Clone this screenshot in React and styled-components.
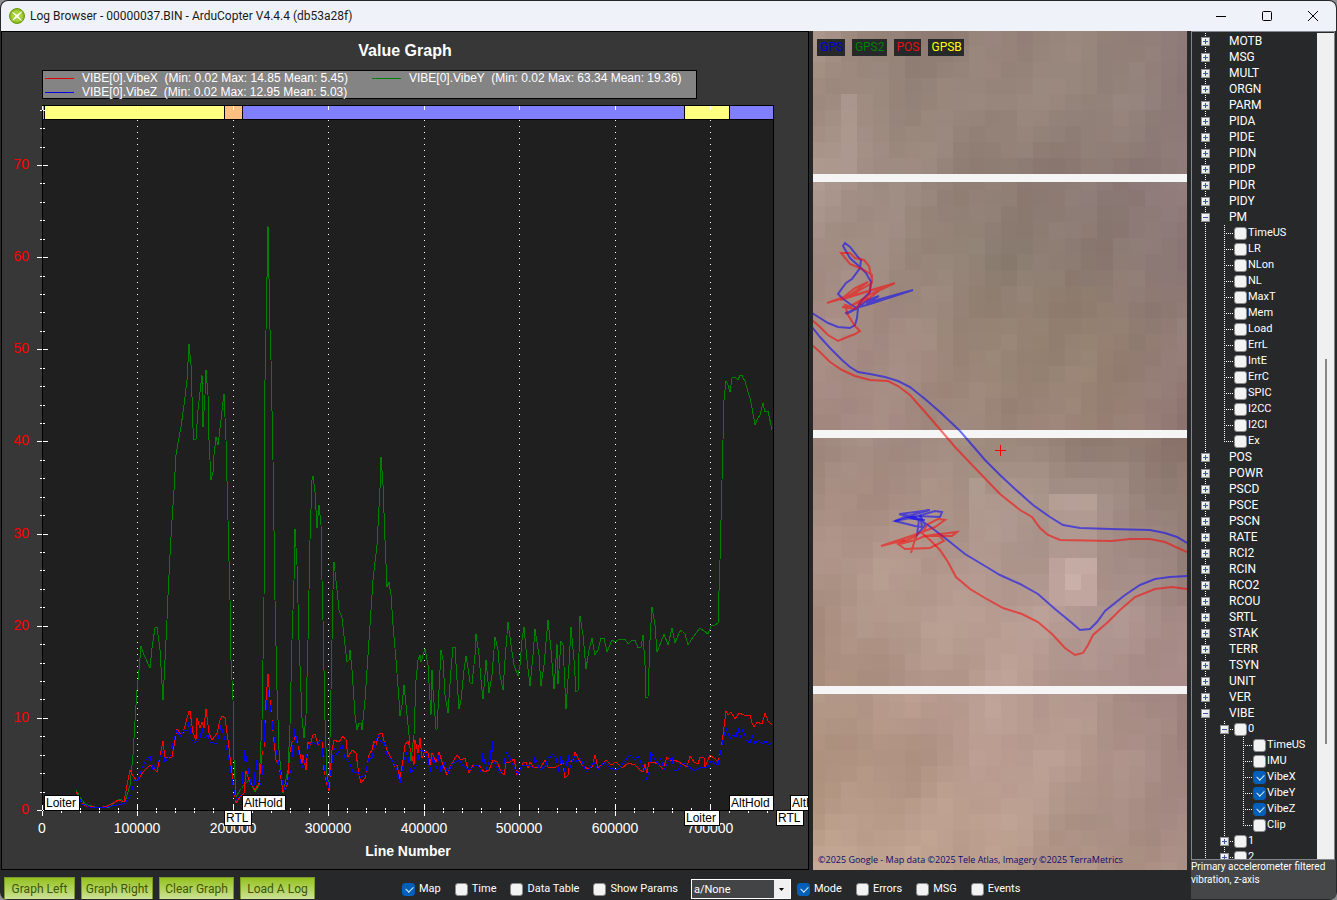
import React from "react";
import styled, { createGlobalStyle, css } from "styled-components";

const GlobalStyle = createGlobalStyle`
  * {
    box-sizing: border-box;
  }
  body {
    margin: 0;
    background: #8f8f93;
    font-family: Roboto, "Liberation Sans", sans-serif;
    font-size: 11px;
  }
`;

const Window = styled.div`
  display: flex;
  flex-direction: column;
  height: 100vh;
  padding: 1px 1px 1px 1px;
  background: #262829;
  border-radius: 8px;
  overflow: hidden;
`;
const TitleBar = styled.header`
  display: flex;
  align-items: center;
  flex: none;
  height: 30px;
  padding-left: 8px;
  background: #eff3f9;
  border-radius: 7px 7px 0 0;
`;
const WindowTitle = styled.h1`
  flex: 1;
  margin: 0 0 0 5px;
  color: #1a1a1a;
  font-size: 12px;
  font-weight: 400;
  line-height: 16px;
`;
const WindowButton = styled.button`
  display: flex;
  align-items: center;
  justify-content: center;
  width: 46px;
  height: 30px;
  padding: 0;
  background: none;
  border: none;
`;
const Body = styled.div`
  display: flex;
  flex: 1;
  gap: 4px;
  min-height: 0;
`;
const Workspace = styled.main`
  display: flex;
  flex: 1;
  flex-direction: column;
  min-width: 0;
`;
const Panels = styled.div`
  display: grid;
  grid-template-columns: minmax(0, 808fr) minmax(0, 374fr);
  flex: 1;
  gap: 4px;
  min-height: 0;
`;

const ChartPanel = styled.section`
  display: flex;
  flex-direction: column;
  min-height: 0;
  background: #373737;
  border: 1px solid #000;
  font-family: "Liberation Sans", Arial, sans-serif;
`;
const ChartTitle = styled.h2`
  margin: 9px 0;
  color: #fff;
  font-size: 16px;
  line-height: 20px;
  text-align: center;
`;
const Legend = styled.ul`
  display: grid;
  grid-template-columns: 327px 326px;
  align-self: flex-start;
  height: 29px;
  margin: 0 0 0 40px;
  padding: 0;
  background: #848484;
  border: 1px solid #000;
  list-style: none;
`;
const LegendItem = styled.li`
  display: flex;
  align-items: center;
  gap: 8px;
  height: 14px;
  padding-left: 2px;
  color: #fff;
  font-size: 12px;
  line-height: 14px;
  white-space: pre;
`;
const LegendLine = styled.span`
  width: 29px;
  height: 1px;
  background: ${(p) => p.$color};
`;
const Plot = styled.svg`
  display: block;
  flex: 1;
  width: 100%;
  min-height: 0;
`;

const MapPanel = styled.section`
  position: relative;
  min-height: 0;
  overflow: hidden;
  background: #9f8b82;
`;
const MapCanvas = styled.svg`
  position: absolute;
  inset: 0;
  width: 100%;
  height: 100%;
`;
const MapTags = styled.div`
  position: absolute;
  top: 8px;
  left: 4px;
  display: flex;
  gap: 7px;
`;
const MapTag = styled.span`
  height: 17px;
  padding: 0 2px 0 3px;
  background: #262829;
  color: ${(p) => p.$color};
  font-size: 12px;
  line-height: 16px;
`;
const MapCredit = styled.span`
  position: absolute;
  bottom: 4px;
  left: 5px;
  color: #0c0c70;
  font-family: "Open Sans", sans-serif;
  font-size: 9px;
  line-height: 12px;
  white-space: nowrap;
`;

const Toolbar = styled.footer`
  display: flex;
  flex: none;
  align-items: flex-end;
  gap: 6px;
  height: 29px;
  padding-left: 3px;
`;
const GraphButton = styled.button`
  height: 22px;
  min-width: ${(p) => p.$width}px;
  padding: 0;
  background: linear-gradient(#94c11f, #cde296);
  border: 1px solid #799a2a;
  border-bottom: none;
  color: #405704;
  font-family: inherit;
  font-size: 12px;
`;
const Options = styled.div`
  display: flex;
  align-items: center;
  gap: 14px;
  height: 20px;
  margin-left: ${(p) => (p.$first ? 81 : 0)}px;
`;
const CheckLabel = styled.label`
  display: flex;
  align-items: center;
  gap: ${(p) => (p.$tree ? 1 : 4)}px;
  color: #fff;
  font-size: 11px;
  line-height: 16px;
  white-space: nowrap;
`;
const Check = styled.input`
  position: relative;
  flex: none;
  width: 13px;
  height: 13px;
  margin: 0;
  appearance: none;
  background: #f3f3f3;
  border: 1px solid #8c8c8c;
  border-radius: 3px;

  &:checked {
    background: #005fb8;
    border-color: #005fb8;
  }
  &:checked::after {
    content: "";
    position: absolute;
    top: 2px;
    left: 3px;
    width: 6px;
    height: 4px;
    border: solid #dbe9f5;
    border-width: 0 0 1px 1px;
    transform: rotate(-45deg);
  }
`;
const SelectBox = styled.div`
  position: relative;
  margin-left: 7px;
`;
const Select = styled.select`
  display: block;
  width: 100px;
  height: 20px;
  padding: 0 0 0 2px;
  appearance: none;
  background: #434445;
  border: 1px solid #fff;
  border-radius: 0;
  color: #fff;
  font-family: inherit;
  font-size: 11px;
`;
const SelectArrow = styled.span`
  position: absolute;
  top: 1px;
  right: 1px;
  display: flex;
  align-items: center;
  justify-content: center;
  width: 16px;
  height: 18px;
  background: #f0f0f0;
  pointer-events: none;
`;

const Sidebar = styled.aside`
  display: flex;
  flex: none;
  flex-direction: column;
  width: 145px;
`;
const TreeBox = styled.div`
  display: flex;
  flex: 1;
  min-height: 0;
  margin-right: 1px;
  padding-top: 1px;
  border: 1px solid #82878f;
`;
const Tree = styled.ul`
  flex: 1;
  margin: 0;
  padding: 0 0 0 4px;
  overflow: hidden;
  list-style: none;
`;
const TreeRow = styled.li`
  display: flex;
  align-items: center;
  height: 16px;
`;
const RootName = styled.span`
  padding-left: 14px;
  color: #fff;
  font-size: 12px;
  line-height: 16px;
`;
const dotsDown = "repeating-linear-gradient(#fff 0 1px, transparent 1px 2px)";
const dotsAcross = "repeating-linear-gradient(90deg, #fff 0 1px, transparent 1px 2px)";
const Guide = styled.span`
  display: flex;
  flex: none;
  align-items: center;
  justify-content: center;
  width: 19px;
  height: 16px;
  background-repeat: no-repeat;
  ${(p) =>
    p.$branch
      ? css`
          background-image: ${dotsDown}, ${dotsAcross};
          background-position: 9px 0, 9px 8px;
          background-size: 1px ${p.$last ? 9 : 16}px, 9px 1px;
        `
      : css`
          background-image: ${dotsDown};
          background-position: 9px 0;
          background-size: 1px 16px;
        `}
`;
const Expander = styled.button`
  display: flex;
  align-items: center;
  justify-content: center;
  width: 9px;
  height: 9px;
  padding: 0;
  background: linear-gradient(135deg, #fff, #dcdcdc);
  border: 1px solid #919191;
`;
const ScrollTrack = styled.div`
  display: flex;
  flex: none;
  flex-direction: column;
  align-items: center;
  width: 17px;
  background: #f0f0f0;
`;
const ScrollThumb = styled.span`
  flex: 384;
  width: 2px;
  background: #868686;
`;
const ScrollSpace = styled.span`
  flex: ${(p) => p.$size};
`;
const Description = styled.p`
  flex: none;
  height: 39px;
  margin: 0;
  background: #454648;
  color: #fff;
  font-size: 10px;
  line-height: 13px;
`;

const lines = {
  y: "76,790 80,797 85,804 95,807 110,807 115,802 120,799 125,802 130,785 133,755 136,705 137,690 139,670 141,646 144,655 150,668 152,648 155,628 157,627 160,650 163,700 165,660 167,620 168,595 170,555 172,520 174,490 176,455 178,443 181,427 184,405 187,380 189,344 191,365 193,428 194,440 196,439 198,410 200,392 202,375 203,427 205,395 206,370 208,395 209,440 211,480 213,472 214,455 216,437 218,445 221,420 224,394 226,440 228,520 230,600 231,660 233,700 234,760 236,797 240,790 244,785 249,780 255,792 259,785 262,720 264,600 265,380 266,330 268,226 270,330 271,360 273,460 275,600 277,690 279,750 283,793 288,770 290,725 292,640 294,580 295,529 297,565 299,640 302,718 304,738 306,715 308,640 310,540 312,480 313,476 315,492 317,528 319,505 321,525 322,580 323,620 325,720 327,775 329,785 331,690 333,590 334,562 337,590 339,610 342,618 345,645 347,662 349,660 350,650 352,670 355,715 357,730 359,723 361,723 362,730 365,700 369,640 373,580 377,545 380,488 381,457 383,485 385,540 387,587 389,582 391,595 393,625 396,660 399,700 400,716 402,705 404,685 407,715 409,735 411,761 414,735 416,680 418,660 420,655 421,662 425,649 428,665 430,700 431,715 432,670 433,690 436,729 437,729 439,690 441,650 443,660 445,695 448,713 451,670 453,647 455,647 457,680 459,709 461,700 464,670 466,656 468,668 470,682 472,684 475,655 476,634 479,655 481,680 483,699 485,675 486,660 489,693 492,675 495,637 498,650 500,675 503,690 505,660 508,622 511,645 514,665 518,676 520,665 522,640 524,627 527,660 530,686 533,655 535,629 539,655 541,686 544,665 548,620 551,650 554,689 557,644 558,684 561,641 563,645 566,709 569,665 571,627 574,660 576,692 578,690 580,616 583,635 586,669 589,650 592,638 594,650 595,655 598,650 601,638 604,638 607,652 612,640 615,642 620,639 625,639 628,644 632,640 635,640 638,648 641,647 643,635 645,665 646,697 648,697 650,640 652,607 655,625 657,652 661,642 664,634 668,645 672,628 675,643 679,633 681,630 685,634 688,645 693,637 697,632 700,628 704,631 708,634 711,626 715,625 718,623 720,560 722,480 724,400 726,381 728,385 730,392 732,378 735,377 738,380 740,375 742,375 743,378 745,381 748,392 750,398 752,408 755,425 758,418 760,415 763,403 765,412 768,411 772,430",
  x: "76,792 82,803 86,806 100,808 107,806 115,802 118,800 124,802 127,785 130,770 133,776 137,781 143,772 150,765 153,768 157,772 159,762 163,741 165,758 172,757 175,740 177,729 180,733 183,733 186,722 189,711 190,711 193,733 196,740 197,718 200,728 202,722 204,728 206,709 209,733 212,740 217,733 220,720 222,716 225,718 228,740 231,765 234,790 236,803 240,797 244,793 246,771 249,780 255,790 259,783 262,755 264,748 266,700 268,674 270,700 272,720 274,742 276,760 279,765 283,792 287,785 290,752 292,742 294,740 295,732 299,750 302,763 303,755 306,770 308,742 310,745 313,735 315,734 318,745 320,740 322,742 324,770 327,785 329,791 332,750 334,740 339,742 343,736 346,740 348,757 352,750 356,753 359,775 361,783 365,778 369,755 372,750 374,741 376,745 379,734 382,733 385,745 388,752 392,760 395,767 397,765 400,779 403,760 405,745 408,741 411,752 414,765 415,740 418,753 420,738 422,758 425,751 428,753 430,765 432,753 436,762 439,752 443,765 447,775 450,767 454,760 457,755 461,760 465,758 469,773 473,765 479,765 484,772 489,770 493,760 497,762 502,773 504,775 506,763 510,762 514,759 517,775 520,770 523,763 526,762 528,768 530,762 534,768 541,767 545,760 548,767 556,767 560,765 563,763 565,778 568,775 570,762 573,760 575,752 578,758 582,765 588,769 592,767 595,755 598,768 602,765 606,760 611,765 616,762 622,768 628,763 635,765 640,770 643,772 645,764 647,773 649,762 653,762 658,764 663,769 667,757 670,760 674,760 679,762 687,767 690,756 694,762 698,764 700,757 704,758 705,767 708,760 710,755 714,758 718,762 721,750 723,735 726,711 728,715 731,712 735,719 739,713 744,715 750,715 752,723 754,727 757,722 762,724 765,713 768,721 772,725",
  z: "79,797 82,804 90,807 107,807 117,805 125,803 128,799 131,795 134,781 138,780 142,768 146,760 150,756 153,770 157,765 160,757 163,751 165,762 168,758 171,755 173,743 177,730 180,737 184,730 187,731 189,722 192,740 195,743 200,738 202,728 204,738 208,735 210,742 217,744 219,735 221,725 225,740 229,760 233,785 236,800 241,795 245,750 248,768 251,785 254,785 256,760 258,780 261,785 263,765 265,720 268,690 271,712 273,730 276,750 279,765 284,790 288,780 291,770 293,745 295,729 298,750 302,768 306,758 309,745 313,742 317,745 321,740 324,765 328,788 331,770 334,748 337,755 342,745 345,758 349,762 353,772 358,772 361,778 365,775 369,758 372,758 374,748 378,735 381,742 384,742 387,755 392,760 397,770 400,783 404,760 407,752 411,773 417,765 420,750 425,752 428,758 430,772 433,757 437,769 438,755 441,772 444,762 448,774 452,764 459,760 463,766 470,770 475,765 478,765 481,772 483,753 486,770 490,760 492,741 494,762 500,773 503,770 506,752 510,758 513,765 518,775 522,765 528,765 533,768 535,757 540,770 546,765 548,757 550,758 552,754 556,758 559,772 561,756 565,772 568,755 570,768 574,756 577,762 581,758 586,772 590,768 594,762 598,770 604,762 610,768 617,770 622,765 627,758 631,755 634,760 638,756 642,765 645,770 646,780 649,772 651,752 654,758 658,765 661,758 664,770 668,762 672,757 674,770 677,771 683,763 688,766 694,771 700,768 708,767 711,761 718,765 720,755 723,740 726,728 730,739 733,735 736,737 738,728 740,738 743,729 746,740 750,743 752,735 755,744 758,740 762,744 766,741 769,745 772,742",
};

const series = [
  { name: "VIBE[0].VibeX  (Min: 0.02 Max: 14.85 Mean: 5.45)", color: "#e00000" },
  { name: "VIBE[0].VibeY  (Min: 0.02 Max: 63.34 Mean: 19.36)", color: "#008000" },
  { name: "VIBE[0].VibeZ  (Min: 0.02 Max: 12.95 Mean: 5.03)", color: "#0000e0" },
];

const modes = [
  { from: 42, to: 44, color: "#ff8080" },
  { from: 44, to: 224, color: "#ffff80" },
  { from: 224, to: 242, color: "#ffbf80" },
  { from: 242, to: 684, color: "#8080ff" },
  { from: 684, to: 729, color: "#ffff80" },
  { from: 729, to: 773, color: "#8080ff" },
];

const modeLabels = [
  { x: 44, y: 795, w: 35, text: "Loiter" },
  { x: 224, y: 810, w: 27, text: "RTL" },
  { x: 242, y: 795, w: 43, text: "AltHold" },
  { x: 684, y: 810, w: 35, text: "Loiter" },
  { x: 729, y: 795, w: 44, text: "AltHold" },
  { x: 776, y: 810, w: 27, text: "RTL" },
  { x: 790, y: 795, w: 44, text: "AltHold" },
];

const plotY = (v) => Math.round(810 - v * 9.215);
const plotX = (v) => Math.floor(42 + (v * 95.5) / 100000);
const yMinor = Array.from({ length: 39 }, (_, i) => i * 2);
const xMinor = Array.from({ length: 39 }, (_, i) => i * 20000);

const Chart = () => (
  <Plot viewBox="2 99 806 770" preserveAspectRatio="xMidYMin meet" fontFamily="Liberation Sans, Arial, sans-serif">
    <g shapeRendering="crispEdges">
      <rect x="42" y="105" width="731" height="705" fill="#1f1f1f" />
      {xMinor
        .filter((v) => v % 100000 === 0 && v > 0)
        .map((v) => (
          <path key={v} d={`M${plotX(v) + 0.5} 120V810`} stroke="#fff" strokeDasharray="1 5" />
        ))}
      {modes.map((m) => (
        <rect key={m.from} x={m.from + 0.5} y="105.5" width={m.to - m.from} height="14" fill={m.color} stroke="#000" />
      ))}
      <polyline points={lines.y} fill="none" stroke="#008000" />
      <polyline points={lines.x} fill="none" stroke="#f00" />
      <polyline points={lines.z} fill="none" stroke="#00f" />
      <path d="M42.5 105V810.5H773.5V105" fill="none" stroke="#000" />
      {yMinor.map((v) => (
        <path
          key={v}
          d={v % 10 ? `M40 ${plotY(v) + 0.5}h2m1 0h2` : `M37 ${plotY(v) + 0.5}h5m1 0h5`}
          stroke="#fff"
        />
      ))}
      {xMinor.map((v) => (
        <path
          key={v}
          d={v % 100000 ? `M${plotX(v) + 0.5} 808v2m0 1v2` : `M${plotX(v) + 0.5} 805v5m0 1v5M${plotX(v) + 0.5} 106v4`}
          stroke="#fff"
        />
      ))}
    </g>
    {yMinor
      .filter((v) => v % 10 === 0)
      .map((v) => (
        <text key={v} x="29" y={plotY(v) + 4} fill="#f00" fontSize="14" textAnchor="end">
          {v}
        </text>
      ))}
    {xMinor
      .filter((v) => v % 100000 === 0)
      .map((v) => (
        <text key={v} x={plotX(v)} y="833" fill="#fff" fontSize="14" textAnchor="middle">
          {v}
        </text>
      ))}
    {modeLabels.map((l) => (
      <g key={l.x}>
        <rect x={l.x + 0.5} y={l.y + 0.5} width={l.w} height="15" fill="#fff" stroke="#000" shapeRendering="crispEdges" />
        <text x={l.x + 2} y={l.y + 12} fontSize="12">
          {l.text}
        </text>
      </g>
    ))}
    <text x="408" y="856" fill="#fff" fontSize="14" fontWeight="700" textAnchor="middle">
      Line Number
    </text>
  </Plot>
);

// terrain colours at five columns, one list per sampled height
const terrain = [
  [31, "ab978b", "8c7a70", "96827a", "97857b", "8c7875"],
  [100, "a38d82", "96857a", "9a877d", "96867c", "8e7b7a"],
  [174, "b09b91", "a08c82", "8c7b71", "8c7a73", "8e7a78"],
  [182, "ae9a91", "9a877d", "8f7d73", "8c7a76", "907b7a"],
  [250, "a68f86", "9c897e", "8b7d71", "8b7a72", "8c7877"],
  [340, "a98e86", "a38b82", "968373", "94806f", "937c77"],
  [430, "a58a82", "a48b82", "9c8579", "9c8578", "907672"],
  [440, "a28a80", "a38c83", "9f8b7e", "8f7b70", "8c756c"],
  [500, "a58c80", "a88e83", "ad978d", "a8938b", "8f7a72"],
  [560, "b0958a", "b5998e", "ad958c", "ab948c", "937d77"],
  [620, "a98e80", "b69c8f", "bb9f95", "b39a94", "a68b88"],
  [686, "a88b7a", "ab8f82", "bda095", "ab9089", "a68987"],
  [694, "b09686", "b99c8e", "bb9f95", "b0958c", "9a7e7a"],
  [760, "b29581", "ad9080", "bd9f94", "b5998f", "a08580"],
  [820, "b69a86", "bb9e8c", "bfa293", "a88f83", "a68a84"],
  [871, "c4a794", "c2a592", "b99c8b", "ae9284", "a98e84"],
];
const channel = (hex, i) => parseInt(hex.slice(i * 2, i * 2 + 2), 16);
const mix = (a, b, t) => a + (b - a) * t;

const terrainColor = (x, y, n) => {
  let r = 0;
  while (r < terrain.length - 2 && terrain[r + 1][0] < y) r++;
  const ty = Math.max(0, Math.min(1, (y - terrain[r][0]) / (terrain[r + 1][0] - terrain[r][0])));
  const fx = Math.max(0, Math.min(3.99, (x - 813) / 93.5));
  const c = Math.floor(fx) + 1;
  const tx = fx % 1;
  const rgb = [0, 1, 2].map((i) => {
    const top = mix(channel(terrain[r][c], i), channel(terrain[r][c + 1], i), tx);
    const low = mix(channel(terrain[r + 1][c], i), channel(terrain[r + 1][c + 1], i), tx);
    return Math.round(mix(top, low, ty) + n);
  });
  return `rgb(${rgb.join(",")})`;
};

const cells = [];
[
  [30, 174],
  [182, 430],
  [438, 686],
  [694, 871],
].forEach(([top, bottom]) => {
  for (let y = top; y < bottom; ) {
    const h = y === top && top > 30 ? 8 : 16;
    for (let x = 809; x < 1187; x += 16) {
      const n = Math.sin(x * 0.071 + y * 0.037) * 3 + (((x * 7 + y * 13 + ((x * y) >> 4)) % 9) - 4) * 0.4;
      cells.push({ x, y, h: Math.min(h, bottom - y), color: terrainColor(x + 8, y + h / 2, n) });
    }
    y += h;
  }
});

const patches = [
  [1049, 494, 48, 16, "#b9a298"],
  [1049, 510, 48, 16, "#b29b92"],
  [1049, 526, 48, 32, "#b19a92"],
  [1049, 558, 16, 48, "#bfa59d"],
  [1065, 558, 32, 16, "#c9b0a9"],
  [1065, 574, 16, 16, "#cfb5af"],
  [1081, 574, 16, 16, "#c4aaa2"],
  [1065, 590, 32, 16, "#c6aaa2"],
  [969, 478, 16, 32, "#b29c91"],
  [969, 510, 32, 16, "#b09a90"],
  [825, 30, 16, 16, "#a59185"],
  [841, 94, 16, 80, "#ad998f"],
];

const tracks = {
  blue: [
    "812,313 820,318 828,323 838,327 850,328 855,325 857,318 858,308 846,314 856,308 870,304 913,290 866,303 879,296 868,300 857,308 850,304 842,298 838,294 846,283 852,279 860,268 861,260 858,257 850,247 845,243 843,246 850,258 861,268 866,273 871,282 870,292 862,300 857,308 849,312 845,313",
    "812,327 820,337 830,348 842,360 850,367 858,372 870,374 885,377 898,381 910,387 925,399 940,412 960,431 985,460 1000,475 1015,489 1033,505 1050,517 1063,525 1080,528 1110,529 1150,530 1165,533 1177,537 1187,543",
    "1187,576 1170,577 1155,579 1140,585 1125,595 1105,611 1097,622 1090,629 1080,630 1072,623 1055,609 1038,594 1020,584 1000,575 985,566 965,554 945,538 928,525 915,517 900,514 930,510 905,517 895,521 915,526 922,527 920,515 925,525 917,535 919,520 899,514",
    "895,521 915,517 935,511 942,512 940,517 918,516 905,518 925,520",
  ],
  red: [
    "812,320 820,327 828,335 838,341 845,338 855,334 860,331 855,326 848,315 845,305 852,307 842,307 855,309 860,304 868,296 872,280 869,266 864,260 855,258 850,253 841,253 850,264 862,269 872,275 872,283 860,290 850,296 827,303 850,295 868,282 855,288 840,300 850,297 895,283 880,290 868,299 852,305 885,286 830,302",
    "812,345 820,352 830,362 842,370 855,376 870,380 888,381 898,386 910,395 925,412 938,427 955,447 975,468 1000,494 1020,510 1032,517 1040,528 1048,535 1060,540 1112,541 1130,539 1150,539 1165,542 1187,552",
    "1187,589 1172,587 1155,589 1135,597 1120,610 1108,622 1093,635 1088,645 1083,653 1075,655 1065,648 1052,634 1038,622 1022,614 1003,608 985,598 970,589 956,577 948,562 940,550 930,540 922,533 928,524 938,519 945,520 935,527 917,534 881,546 905,540",
    "911,553 916,536 898,544 905,549 930,548 944,541 938,534 925,536 957,532 952,536 925,536 915,540 900,544",
  ],
};

const MapView = () => (
  <MapPanel>
    <MapCanvas viewBox="813 31 374 839" preserveAspectRatio="xMidYMid slice">
      <g shapeRendering="crispEdges">
        <rect x="813" y="31" width="374" height="839" fill="#f5f5f5" />
        {cells.map((c) => (
          <rect key={`${c.x}-${c.y}`} x={c.x} y={c.y} width="16" height={c.h} fill={c.color} />
        ))}
        {patches.map(([x, y, w, h, fill]) => (
          <rect key={`${x}-${y}`} x={x} y={y} width={w} height={h} fill={fill} fillOpacity="0.8" />
        ))}
      </g>
      {tracks.blue.map((t) => (
        <polyline key={t} points={t} fill="none" stroke="#0000ff" strokeOpacity="0.54" strokeWidth="2" />
      ))}
      {tracks.red.map((t) => (
        <polyline key={t} points={t} fill="none" stroke="#ff0000" strokeOpacity="0.54" strokeWidth="2" />
      ))}
      <path d="M995 450.5h11M1000.5 445v11" stroke="#f00" shapeRendering="crispEdges" />
    </MapCanvas>
    <MapTags>
      <MapTag $color="#0000e0">GPS</MapTag>
      <MapTag $color="#008000">GPS2</MapTag>
      <MapTag $color="#e81010">POS</MapTag>
      <MapTag $color="#ffff00">GPSB</MapTag>
    </MapTags>
    <MapCredit>©2025 Google - Map data ©2025 Tele Atlas, Imagery ©2025 TerraMetrics</MapCredit>
  </MapPanel>
);

const leaf = (name, checked) => ({ name, checked });
const treeData = [
  ..."MOTB MSG MULT ORGN PARM PIDA PIDE PIDN PIDP PIDR PIDY".split(" ").map((name) => ({ name })),
  {
    name: "PM",
    children: "TimeUS LR NLon NL MaxT Mem Load ErrL IntE ErrC SPIC I2CC I2CI Ex".split(" ").map((n) => leaf(n)),
  },
  ..."POS POWR PSCD PSCE PSCN RATE RCI2 RCIN RCO2 RCOU SRTL STAK TERR TSYN UNIT VER".split(" ").map((name) => ({ name })),
  {
    name: "VIBE",
    children: [
      {
        name: "0",
        children: [
          leaf("TimeUS"),
          leaf("IMU"),
          leaf("VibeX", true),
          leaf("VibeY", true),
          leaf("VibeZ", true),
          leaf("Clip"),
        ],
      },
      { name: "1", closed: true },
      { name: "2", closed: true },
    ],
  },
];

const ExpandButton = ({ open, name }) => (
  <Expander aria-label={`${open ? "Collapse" : "Expand"} ${name}`}>
    <svg width="7" height="7" viewBox="0 0 7 7" shapeRendering="crispEdges">
      <path d={open ? "M1 3.5h5" : "M1 3.5h5M3.5 1v5"} stroke="#3b56a5" />
    </svg>
  </Expander>
);

const renderNodes = (nodes, depth = 0, path = "") =>
  nodes.flatMap((node, i) => {
    const key = `${path}/${node.name}`;
    const isLeaf = depth > 0 && !node.children && !node.closed;
    return [
      <TreeRow key={key}>
        {Array.from({ length: depth }, (_, d) => (
          <Guide key={d} />
        ))}
        <Guide $branch={depth > 0} $last={i === nodes.length - 1 && isLeaf}>
          {!isLeaf && <ExpandButton open={!!node.children} name={node.name} />}
        </Guide>
        {depth === 0 ? (
          <RootName>{node.name}</RootName>
        ) : (
          <CheckLabel $tree>
            <Check type="checkbox" defaultChecked={node.checked} />
            {node.name}
          </CheckLabel>
        )}
      </TreeRow>,
      ...(node.children ? renderNodes(node.children, depth + 1, key) : []),
    ];
  });

const Option = ({ name, checked }) => (
  <CheckLabel>
    <Check type="checkbox" defaultChecked={checked} />
    {name}
  </CheckLabel>
);

const App = () => {
  return (
    <>
      <GlobalStyle />
      <Window>
        <TitleBar>
          <svg width="16" height="16" viewBox="0 0 16 16">
            <circle cx="8" cy="8" r="7.5" fill="#8dbb1e" stroke="#6c9a12" />
            <circle cx="8" cy="8" r="5.8" fill="#a9d13c" />
            <path d="M3.5 4.5 8 7.2l4.5-3.4L9 8.2l3.4 4.2L8 9.2l-4.2 2.9L7 8z" fill="#fff" stroke="#fff" strokeWidth=".8" />
          </svg>
          <WindowTitle>Log Browser - 00000037.BIN - ArduCopter V4.4.4 (db53a28f)</WindowTitle>
          <WindowButton aria-label="Minimize">
            <svg width="10" height="10">
              <path d="M0 5.5h10" stroke="#000" />
            </svg>
          </WindowButton>
          <WindowButton aria-label="Maximize">
            <svg width="10" height="10">
              <rect x=".5" y=".5" width="9" height="9" rx="1" fill="none" stroke="#000" />
            </svg>
          </WindowButton>
          <WindowButton aria-label="Close">
            <svg width="10" height="10">
              <path d="M0 0l10 10M10 0L0 10" stroke="#000" />
            </svg>
          </WindowButton>
        </TitleBar>
        <Body>
          <Workspace>
            <Panels>
              <ChartPanel>
                <ChartTitle>Value Graph</ChartTitle>
                <Legend>
                  {series.map((s) => (
                    <LegendItem key={s.name}>
                      <LegendLine $color={s.color} />
                      {s.name}
                    </LegendItem>
                  ))}
                </Legend>
                <Chart />
              </ChartPanel>
              <MapView />
            </Panels>
            <Toolbar>
              <GraphButton $width={71}>Graph Left</GraphButton>
              <GraphButton $width={72}>Graph Right</GraphButton>
              <GraphButton $width={75}>Clear Graph</GraphButton>
              <GraphButton $width={75}>Load A Log</GraphButton>
              <Options $first>
                <Option name="Map" checked />
                <Option name="Time" />
                <Option name="Data Table" />
                <Option name="Show Params" />
              </Options>
              <SelectBox>
                <Select aria-label="Preset graph">
                  <option>a/None</option>
                </Select>
                <SelectArrow>
                  <svg width="5" height="3">
                    <path d="M0 0h5L2.5 3z" fill="#000" />
                  </svg>
                </SelectArrow>
              </SelectBox>
              <Options>
                <Option name="Mode" checked />
                <Option name="Errors" />
                <Option name="MSG" />
                <Option name="Events" />
              </Options>
            </Toolbar>
          </Workspace>
          <Sidebar>
            <TreeBox>
              <Tree>{renderNodes(treeData)}</Tree>
              <ScrollTrack>
                <ScrollSpace $size={325} />
                <ScrollThumb />
                <ScrollSpace $size={115} />
              </ScrollTrack>
            </TreeBox>
            <Description>Primary accelerometer filtered vibration, z-axis</Description>
          </Sidebar>
        </Body>
      </Window>
    </>
  );
};

export default App;
